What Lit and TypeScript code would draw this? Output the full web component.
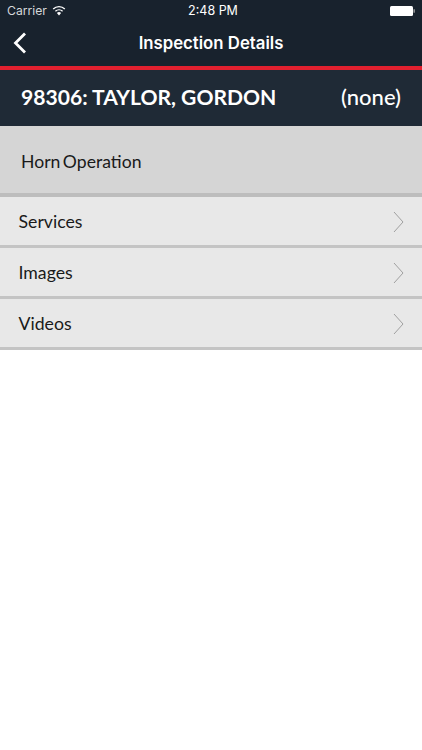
import { LitElement, html, css, svg } from "lit";
import { customElement } from "lit/decorators.js";

const rows = ["Services", "Images", "Videos"];

@customElement("app-root")
export class AppRoot extends LitElement {
  static styles = css`
    :host { display: block; width: 422px; height: 750px; background: #fff; font-family: Lato, "Liberation Sans", sans-serif; overflow: hidden; }
    .top { background: #18222d; height: 66px; display: flex; flex-direction: column; }
    .status { height: 21px; display: grid; grid-template-columns: 1fr auto 1fr; align-items: center; padding: 0 7px; color: #fff; font-family: Inter, "Liberation Sans", sans-serif; font-size: 12.5px; }
    .status .left { display: flex; align-items: center; gap: 5px; color: #d5d8db; font-size: 12.2px; }
    .status .time { transform: translateX(2px); }
    .status .right { display: flex; justify-content: flex-end; }
    .nav { height: 45px; display: grid; grid-template-columns: 1fr auto 1fr; align-items: center; padding: 0 13px 2px; box-sizing: border-box; }
    .nav .title { color: #fff; font-size: 16.75px; font-family: Inter, Lato, sans-serif; font-weight: 600; }
    .red { height: 4px; background: #e2202f; }
    .header { height: 56px; background: #1f2a36; color: #fff; display: flex; align-items: center; justify-content: space-between; padding: 0 21px 3px; font-size: 22px; font-weight: 500; box-sizing: border-box; }
    .name { font-size: 21.1px; font-weight: 700; }
    .section { height: 71px; background: #d5d5d5; border-bottom: 4px solid #bdbdbd; box-sizing: border-box; display: flex; align-items: center; padding: 3px 21px 0; font-size: 17.6px; word-spacing: -2px; color: #1a1a1a; }
    .row { height: 51px; background: #e8e8e8; border-bottom: 3px solid #c4c4c4; box-sizing: border-box; display: flex; align-items: center; justify-content: space-between; padding: 1px 18px 0 18.5px; font-size: 17.7px; color: #1a1a1a; }
    .row svg { display: block; }
  `;
  render() {
    return html`
      <div class="top">
        <div class="status">
          <div class="left">Carrier
            <svg width="14" height="11" viewBox="0 0 14 11"><path d="M7 10.5 4.9 8.1a3 3 0 0 1 4.2 0Z" fill="#fff"/><path d="M3.4 6.3a5.2 5.2 0 0 1 7.2 0M1.2 3.9a8.4 8.4 0 0 1 11.6 0" fill="none" stroke="#fff" stroke-width="1.4"/></svg>
          </div>
          <div class="time">2:48 PM</div>
          <div class="right">
            <svg width="25" height="10" viewBox="0 0 25 10"><rect x="0" y="0" width="23" height="10" rx="1.5" fill="#fff"/><rect x="23.5" y="3.3" width="1.3" height="3.4" fill="#aaa"/></svg>
          </div>
        </div>
        <div class="nav">
          <svg width="14" height="22" viewBox="0 0 14 22"><path d="M12 1.5 2.5 11 12 20.5" fill="none" stroke="#fff" stroke-width="2.8"/></svg>
          <div class="title">Inspection Details</div>
          <div></div>
        </div>
      </div>
      <div class="red"></div>
      <div class="header"><span class="name">98306: TAYLOR, GORDON</span><span>(none)</span></div>
      <div class="section">Horn Operation</div>
      ${rows.map(r => html`<div class="row"><span>${r}</span>
        <svg width="11" height="22" viewBox="0 0 11 22">${svg`<path d="M1 1 10 11 1 21" fill="none" stroke="#a0a0a0" stroke-width="1"/>`}</svg></div>`)}
    `;
  }
}
